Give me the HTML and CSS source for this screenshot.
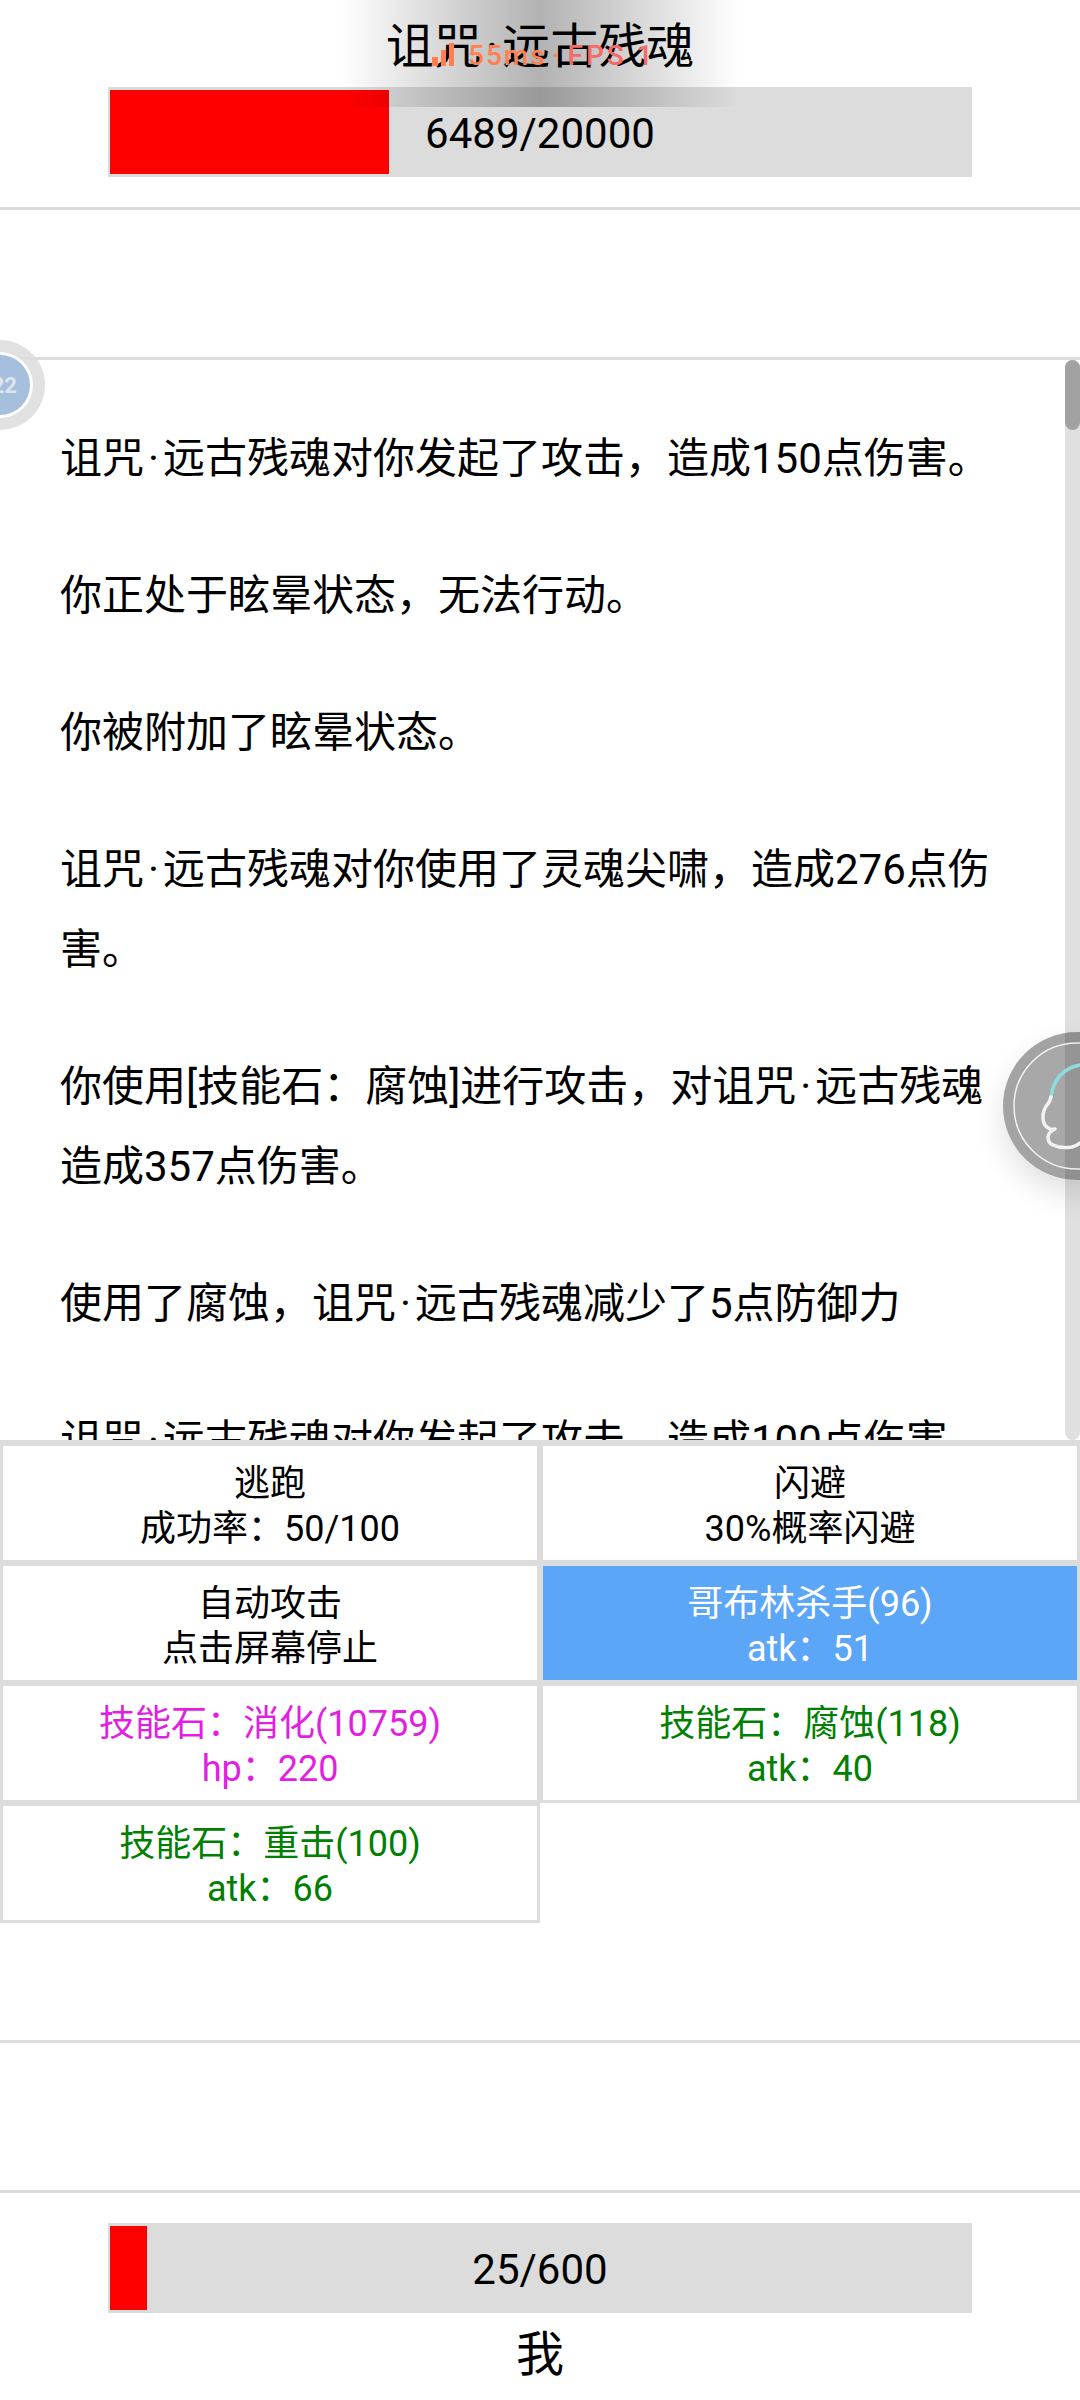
FILE: index.html
```html
<!DOCTYPE html>
<html lang="zh-CN">
<head>
    <meta charset="UTF-8">
    <meta name="viewport" content="width=device-width, initial-scale=1.0">
    <title>战斗</title>
    <link rel="stylesheet" href="styles.css">
</head>
<body>
    <div class="page">
        <div class="enemy-panel">
            <div class="unit-name enemy-name">诅咒<span class="mid-dot">·</span>远古残魂</div>
            <div class="hp-bar">
                <div class="hp-fill" style="width: 279px"></div>
                <div class="hp-text">6489/20000</div>
            </div>
        </div>
        <div class="status-panel"></div>

        <div class="battle-log">
            <div class="log-scroll">
                <p class="log-line">诅咒<span class="mid-dot">·</span>远古残魂对你发起了攻击，造成150点伤害。</p>
                <p class="log-line">你正处于眩晕状态，无法行动。</p>
                <p class="log-line">你被附加了眩晕状态。</p>
                <p class="log-line">诅咒<span class="mid-dot">·</span>远古残魂对你使用了灵魂尖啸，造成276点伤害。</p>
                <p class="log-line">你使用[技能石：腐蚀]进行攻击，对诅咒<span class="mid-dot">·</span>远古残魂造成357点伤害。</p>
                <p class="log-line">使用了腐蚀，诅咒<span class="mid-dot">·</span>远古残魂减少了5点防御力</p>
                <p class="log-line">诅咒<span class="mid-dot">·</span>远古残魂对你发起了攻击，造成100点伤害。</p>
            </div>
            <div class="scroll-track"><div class="scroll-thumb"></div></div>
        </div>

        <div class="skill-grid">
            <div class="skill-btn"><span>逃跑</span><span>成功率：50/100</span></div>
            <div class="skill-btn"><span>闪避</span><span>30%概率闪避</span></div>
            <div class="skill-btn"><span>自动攻击</span><span>点击屏幕停止</span></div>
            <div class="skill-btn active"><span>哥布林杀手(96)</span><span>atk：51</span></div>
            <div class="skill-btn epic"><span>技能石：消化(10759)</span><span>hp：220</span></div>
            <div class="skill-btn rare"><span>技能石：腐蚀(118)</span><span>atk：40</span></div>
            <div class="skill-btn rare"><span>技能石：重击(100)</span><span>atk：66</span></div>
        </div>

        <div class="spacer-top"></div>
        <div class="buff-panel"></div>

        <div class="player-panel">
            <div class="hp-bar">
                <div class="hp-fill" style="width: 37px"></div>
                <div class="hp-text">25/600</div>
            </div>
            <div class="unit-name player-name">我</div>
        </div>
    </div>

    <!-- system overlays on top of the page -->
    <div class="net-badge">
        <svg class="net-icon" width="22" height="23" viewBox="0 0 22 23">
            <rect x="0" y="14" width="6" height="9" fill="#ff7f50"/>
            <rect x="9" y="7" width="5" height="16" fill="#ff7f50"/>
            <rect x="17" y="0" width="5" height="23" fill="#ff7f50"/>
        </svg>
        <span class="net-ping">55ms</span>
        <span class="net-dot">·</span>
        <span class="net-fps">FPS 1</span>
    </div>

    <div class="float-timer-clip">
        <div class="float-timer">
            <div class="float-timer-disc"><span>22</span></div>
        </div>
    </div>

    <div class="float-assist-clip">
        <div class="float-assist">
            <svg width="148" height="148" viewBox="0 0 148 148">
                <circle cx="74" cy="74" r="63" fill="rgba(255,255,255,.06)" stroke="#fff" stroke-opacity=".85" stroke-width="1.5"/>
                <path d="M48 65 C50 48 60 36 77 33" fill="none" stroke="#8fdcdc" stroke-width="3.5" stroke-linecap="round"/>
                <path d="M48 65 C47 69 46 71 44 73 C41 77 40 81 40 85 C40 90 41 93 44 95 C46 97 49 98 52 97 C48 99 45 102 45 105 C45 109 47 112 50 113 C56 116 63 116 69 115 C72 114 75 113 77 111" fill="none" stroke="#f2f2f2" stroke-width="3.5" stroke-linecap="round" stroke-linejoin="round"/>
            </svg>
        </div>
    </div>
</body>
</html>
```

FILE: styles.css
```css
* {
    box-sizing: border-box;
}
html, body {
    margin: 0;
    padding: 0;
}
body {
    position: relative;
    width: 1080px;
    height: 2400px;
    overflow: hidden;
    background-color: #fff;
    color: #000;
    font-family: Roboto, "Noto Sans CJK SC", sans-serif;
}
.page {
    display: flex;
    flex-direction: column;
    height: 2400px;
}
.mid-dot {
    margin: 0 4px;
}

/* enemy and player */
.enemy-panel {
    height: 210px;
    padding-top: 18px;
    border-bottom: 3px solid #dcdcdc;
}
.unit-name {
    font-size: 48px;
    line-height: 57px;
    text-align: center;
}
.enemy-name {
    height: 69px;
}
.hp-bar {
    position: relative;
    width: 864px;
    height: 90px;
    margin: 0 auto;
    padding: 3px 2px;
    background-color: #dcdcdc;
}
.hp-fill {
    height: 84px;
    background-color: #f00;
}
.hp-text {
    position: absolute;
    top: 0;
    left: 0;
    width: 100%;
    font-size: 42px;
    line-height: 94px;
    text-align: center;
}
.status-panel {
    height: 150px;
    border-bottom: 3px solid #dcdcdc;
}

/* log */
.battle-log {
    display: flex;
    height: 1080px;
    overflow: hidden;
}
.log-scroll {
    flex: 1;
    padding: 59px 50px 0 60px;
    overflow: hidden;
}
.log-line {
    margin: 0 0 57px;
    font-size: 42px;
    line-height: 80px;
}
.scroll-track {
    flex: none;
    width: 15px;
    background-color: #e0e0e0;
    border-radius: 8px;
}
.scroll-thumb {
    height: 70px;
    background-color: #a2a2a2;
    border-radius: 8px;
}

/* buttons */
.skill-grid {
    display: grid;
    grid-template-columns: 540px 540px;
    grid-auto-rows: 120px;
    border-top: 3px solid #dcdcdc;
}
.skill-btn {
    display: flex;
    flex-direction: column;
    align-items: center;
    justify-content: center;
    padding-top: 7px;
    border: 3px solid #dcdcdc;
    font-size: 36px;
    line-height: 45px;
}
.skill-btn.active {
    background-color: #5ca6f8;
    color: #fff;
}
.skill-btn.epic {
    color: #e31ee3;
}
.skill-btn.rare {
    color: #008000;
}
.spacer-top {
    height: 120px;
    border-bottom: 3px solid #dcdcdc;
}
.buff-panel {
    height: 150px;
    border-bottom: 3px solid #dcdcdc;
}
.player-panel {
    padding-top: 30px;
}
.player-name {
    margin-top: 13px;
}

/* overlays */
.net-badge {
    position: absolute;
    top: 0;
    left: 340px;
    width: 400px;
    height: 107px;
    padding: 43px 0 0 92px;
    display: flex;
    align-items: flex-start;
    background: linear-gradient(90deg, rgba(0,0,0,0), rgba(0,0,0,.3) 50%, rgba(0,0,0,0));
    color: #ff7f50;
    font-size: 28px;
    font-weight: 500;
    line-height: 25px;
    letter-spacing: 2px;
    white-space: nowrap;
}
.net-icon {
    flex: none;
    margin-right: 14px;
}
.net-dot {
    margin: 0 6px 0 5px;
    color: #ff8060;
}
.net-fps {
    color: #f66a66;
    letter-spacing: 3px;
}
.float-timer-clip {
    position: absolute;
    top: 330px;
    left: 0;
    width: 60px;
    height: 110px;
    overflow: hidden;
}
.float-timer {
    position: absolute;
    top: 10px;
    left: -45px;
    width: 90px;
    height: 90px;
    border-radius: 50%;
    border: 12px solid rgba(200,200,200,.55);
    background-color: rgba(255,255,255,.7);
}
.float-timer-disc {
    display: flex;
    align-items: center;
    justify-content: flex-end;
    position: absolute;
    top: 3px;
    left: 3px;
    width: 60px;
    height: 60px;
    padding-right: 13px;
    border-radius: 50%;
    background-color: #a6bfdc;
    color: #dfe5ec;
    font-size: 22px;
    font-weight: 700;
}
.float-assist-clip {
    position: absolute;
    top: 1000px;
    left: 960px;
    width: 120px;
    height: 240px;
    overflow: hidden;
}
.float-assist {
    position: absolute;
    top: 32px;
    left: 43px;
    width: 148px;
    height: 148px;
    border-radius: 50%;
    background-color: rgba(0,0,0,.36);
    box-shadow: 0 14px 30px rgba(0,0,0,.12);
}
```
